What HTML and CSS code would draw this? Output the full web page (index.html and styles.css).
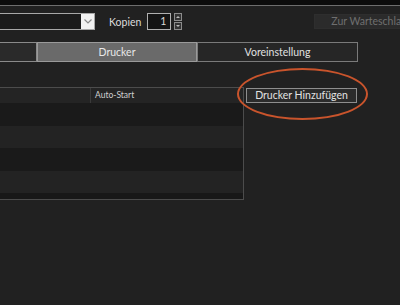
FILE: index.html
```html
<!DOCTYPE html>
<html lang="de">
<head>
  <meta charset="UTF-8" />
  <title>Drucker</title>
  <link rel="stylesheet" href="styles.css">
</head>
<body>
  <div class="window">
    <div class="titlebar"></div>

    <div class="toolbar">
      <div class="select">
        <div class="select-value"></div>
        <div class="select-btn">
          <svg width="8" height="5" viewBox="0 0 8 5"><path d="M0.5 0.5 L4 4 L7.5 0.5" fill="none" stroke="#8a8a8a" stroke-width="1.2"/></svg>
        </div>
      </div>
      <span class="label">Kopien</span>
      <div class="spin">1</div>
      <div class="spin-btns">
        <div class="spin-btn"><span class="arr-up"></span></div>
        <div class="spin-btn"><span class="arr-down"></span></div>
      </div>
      <button class="queue-btn" disabled>Zur Warteschlange</button>
    </div>

    <div class="tabs">
      <div class="tab tab-first"></div>
      <div class="tab active">Drucker</div>
      <div class="tab">Voreinstellung</div>
    </div>

    <div class="content">
      <div class="table">
        <div class="thead">
          <div class="th th-name"></div>
          <div class="th">Auto-Start</div>
        </div>
        <div class="row odd"></div>
        <div class="row"></div>
        <div class="row odd"></div>
        <div class="row"></div>
        <div class="row odd last"></div>
      </div>
      <div class="side">
        <button class="add-btn">Drucker Hinzufügen</button>
        <div class="mark"></div>
      </div>
    </div>
  </div>
</body>
</html>
```

FILE: styles.css
```css
* {
  box-sizing: border-box;
}

body {
  margin: 0;
  background: #212121;
  font-family: Lato, 'Noto Sans', sans-serif;
  color: #d8d8d8;
  overflow: hidden;
  height: 305px;
}

/* fenster beginnt links ausserhalb des bildes */
.window {
  margin-left: -100px;
  width: 500px;
  overflow: hidden;
}

.titlebar {
  height: 6px;
  background: #0c0c0c;
  border-bottom: 1px solid #6e6e6e;
}

.toolbar {
  display: flex;
  align-items: center;
  margin-top: 7px;
  height: 17px;
}

.toolbar > * {
  flex-shrink: 0;
}

.select {
  display: flex;
  width: 195px;
  height: 17px;
  border: 1px solid #a8a8a8;
  background: #1b1b1b;
}

.select-value {
  flex: 1;
}

.select-btn {
  width: 13px;
  background: #f2f2f2;
  display: flex;
  align-items: center;
  justify-content: center;
}

.label {
  margin-left: 14px;
  font-size: 10.5px;
  color: #dcdcdc;
}

.spin {
  margin-left: 6px;
  width: 24px;
  height: 17px;
  border: 1px solid #b0b0b0;
  background: #141414;
  font-size: 10.5px;
  line-height: 15px;
  text-align: right;
  padding-right: 4px;
}

.spin-btns {
  margin-left: 3px;
  display: flex;
  flex-direction: column;
  gap: 1px;
}

.spin-btn {
  width: 8px;
  height: 8px;
  border: 1px solid #8c8c8c;
  background: #333;
  display: flex;
  align-items: center;
  justify-content: center;
}

.arr-up,
.arr-down {
  width: 0;
  height: 0;
  border-left: 2px solid transparent;
  border-right: 2px solid transparent;
}

.arr-up {
  border-bottom: 2px solid #bbb;
}

.arr-down {
  border-top: 2px solid #bbb;
}

.queue-btn {
  margin-left: 132px;
  width: 110px;
  height: 15px;
  padding: 0 0 0 16px;
  text-align: left;
  white-space: nowrap;
  border: 1px solid #2e2e2e;
  background: #2b2b2b;
  color: #6f6f6f;
  font-family: inherit;
  font-size: 10.5px;
  line-height: 13px;
}

.tabs {
  display: flex;
  margin-top: 12px;
  height: 20px;
}

.tab {
  height: 20px;
  border: 1px solid #8a8a8a;
  background: #262626;
  font-size: 10.5px;
  line-height: 18px;
  text-align: center;
  color: #e0e0e0;
}

.tab-first {
  width: 137px;
  background: #2a2a2a;
}

.tab.active {
  width: 160px;
  background: #6a6a6a;
  border-color: #9a9a9a;
  color: #e8e8e8;
}

.tab:last-child {
  width: 161px;
  border-color: #7a7a7a;
}

.content {
  display: flex;
  align-items: flex-start;
  margin-top: 25px;
}

.table {
  width: 344px;
  height: 113px;
  border: 1px solid #4c4c4c;
  border-left: none;
  overflow: hidden;
}

.thead {
  display: flex;
  height: 15px;
  background: #242424;
}

.th {
  font-size: 8.5px;
  line-height: 15px;
  color: #d0d0d0;
  padding-left: 4px;
}

.th-name {
  width: 191px;
  border-right: 1px solid #3a3a3a;
}

.row {
  height: 22.5px;
  background: #232323;
}

.row.odd {
  background: #1a1a1a;
}

.row.last {
  background: #181818;
}

.side {
  position: relative;
  margin-left: 2px;
  padding-top: 1px;
}

.add-btn {
  display: block;
  width: 111px;
  height: 15px;
  padding: 0;
  border: 1px solid #8e8e8e;
  background: #2b2b2b;
  color: #e2e2e2;
  font-family: inherit;
  font-size: 10.5px;
  line-height: 13px;
}

/* markierung um den knopf */
.mark {
  position: absolute;
  left: -9px;
  top: -19px;
  width: 131px;
  height: 52px;
  border: 2px solid #c9542c;
  border-radius: 50%;
}
```
